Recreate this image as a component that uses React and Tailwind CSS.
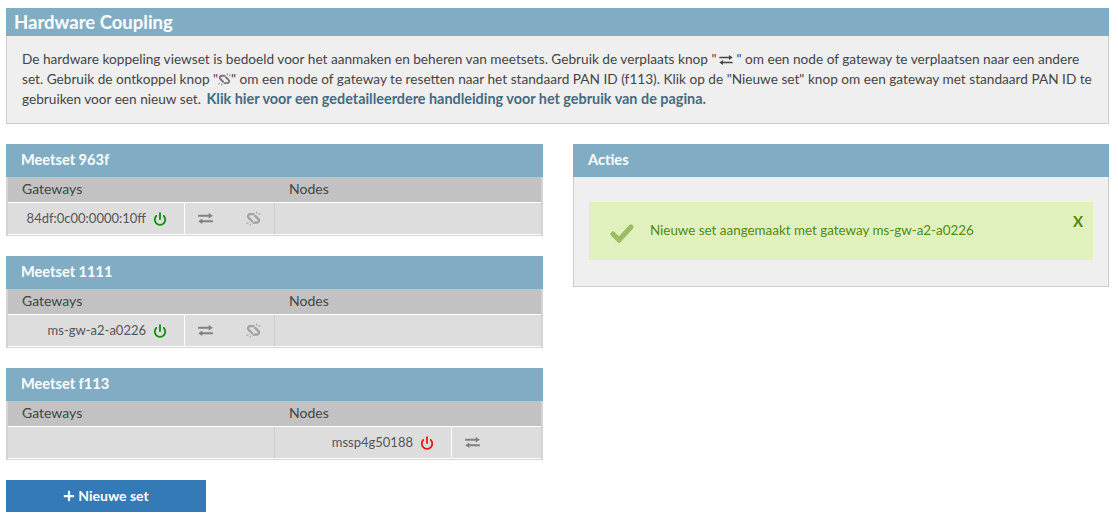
import React from "react";
import { FaPlus } from "react-icons/fa";
import { Power } from "lucide-react";

const Transfer = ({ className }) => (
  <svg viewBox="0 0 16 12" className={className} fill="currentColor" aria-hidden="true">
    <path d="M0 2h11.5V0L16 3 11.5 6V4H0z" />
    <path d="M16 8H4.5V6L0 9l4.5 3v-2H16z" />
  </svg>
);

const Brk = ({ className }) => (
  <svg viewBox="0 0 14 14" className={className} fill="none" stroke="currentColor" aria-hidden="true">
    <path d="M7 3H4a2 2 0 0 0-1.4 3.5L5.5 9.4" strokeWidth="2.1" strokeLinecap="round" />
    <path d="M8.5 4.6l2.9 2.8a2 2 0 0 1-1.4 3.5H7" strokeWidth="2.1" strokeLinecap="round" />
    <path d="M10 .4v2M13.6 2.2l-1.8 1.1M4 13.6v-2M.4 11.8l1.8-1.1" strokeWidth="1" />
  </svg>
);

const Check = ({ className }) => (
  <svg viewBox="0 0 24 20" className={className} fill="none" stroke="currentColor" aria-hidden="true">
    <path d="M3 11l6 6L21 4" strokeWidth="5" strokeLinecap="round" strokeLinejoin="miter" />
  </svg>
);

const PowerIcon = ({ on }) => (
  <Power className={on ? "w-[14px] h-[14px] text-[#0a8a0a]" : "w-[14px] h-[14px] text-[#f01010]"} strokeWidth={3} />
);

const NameCell = ({ name, on }) => (
  <div className="flex items-center justify-end gap-[7px] pr-[17px] h-full w-[176px] bg-[#dddddd]">
    <span className="text-[#555555] text-[13px]">{name}</span>
    <PowerIcon on={on} />
  </div>
);

const Actions = ({ unlink }) => (
  <div className="flex items-center h-full w-[90px] border-l border-white bg-[#dddddd] text-[#808080]">
    <Transfer className="ml-[13px] w-[15px] h-[11px]" />
    {unlink && <Brk className="ml-[33px] w-[15px] h-[15px] text-[#a0a0a0]" />}
  </div>
);

const MeetSet = ({ title, children }) => (
  <section>
    <h2 className="h-[33px] bg-[#81adc4] pl-[15px] pb-[2px] flex items-center text-white text-[14.6px] font-bold">{title}</h2>
    <div className="border-r-2 border-b border-l-2 border-[#d4d4d4] w-[537px]">
      <div className="flex h-[26px] pb-[2px] bg-[#c2c2c2] border-b border-white items-center text-[#444444]">
        <span className="w-[281px] pl-[14px]">Gateways</span>
        <span>Nodes</span>
      </div>
      <div className="flex h-[32px] border-b border-white">{children}</div>
    </div>
  </section>
);

export default function App() {
  return (
    <div className="w-[1118px] h-[523px] bg-white pl-[6px] pt-[8px] pr-[9px] text-[14px] leading-[19.5px] overflow-hidden font-['Lato','Noto_Sans',sans-serif]">
      <section>
        <h1 className="h-[28px] bg-[#81adc4] pl-[8px] pt-[1px] flex items-center text-white text-[18.5px] font-bold">Hardware Coupling</h1>
        <div className="h-[88px] bg-[#efefef] border border-t-0 border-[#cccccc] px-[15px] pt-[14px] text-[13.65px] text-[#444444]">
          <p className="whitespace-nowrap">
            De hardware koppeling viewset is bedoeld voor het aanmaken en beheren van meetsets. Gebruik de verplaats knop "
            <Transfer className="inline mx-[3px] w-[14px] h-[10px] text-[#444444] align-[-1px]" />
            " om een node of gateway te verplaatsen naar een andere<br />
            set. Gebruik de ontkoppel knop "
            <Brk className="inline w-[13px] h-[13px] text-[#777777] align-[-2px]" />
            " om een node of gateway te resetten naar het standaard PAN ID (f113). Klik op de "Nieuwe set" knop om een gateway met standaard PAN ID te<br />
            gebruiken voor een nieuw set. <a className="ml-[2px] text-[14.4px] font-bold text-[#456b80]">Klik hier voor een gedetailleerdere handleiding voor het gebruik van de pagina.</a>
          </p>
        </div>
      </section>

      <div className="flex gap-[30px] mt-[20px]">
        <div className="w-[537px] flex flex-col">
          <div className="flex flex-col gap-[20px]">
            <MeetSet title="Meetset 963f">
              <NameCell name="84df:0c00:0000:10ff" on />
              <Actions unlink />
              <div className="flex-1 bg-[#dddddd] border-l border-[#cccccc]" />
            </MeetSet>
            <MeetSet title="Meetset 1111">
              <NameCell name="ms-gw-a2-a0226" on />
              <Actions unlink />
              <div className="flex-1 bg-[#dddddd] border-l border-[#cccccc]" />
            </MeetSet>
            <MeetSet title="Meetset f113">
              <div className="w-[267px] bg-[#dddddd] border-r border-[#cccccc]" />
              <NameCell name="mssp4g50188" />
              <Actions />
            </MeetSet>
          </div>
          <button className="mt-[20px] w-[200px] h-[32px] bg-[#337ab7] text-white font-bold flex items-center justify-center gap-[3px]">
            <FaPlus className="w-[12px] h-[12px]" />
            Nieuwe set
          </button>
        </div>

        <section className="w-[536px]">
          <h2 className="h-[33px] bg-[#81adc4] pl-[15px] pb-[2px] flex items-center text-white text-[14.6px] font-bold">Acties</h2>
          <div className="h-[110px] bg-[#efefef] border border-t-0 border-[#cccccc] px-[15px] pt-[25px]">
            <div className="relative h-[58px] bg-[#e0f1be] flex items-center pl-[21px] text-[13.4px] text-[#4f8a10]">
              <Check className="w-[24px] h-[20px] text-[#9cbb62] mt-[4px]" />
              <span className="ml-[16px]">Nieuwe set aangemaakt met gateway ms-gw-a2-a0226</span>
              <span className="absolute right-[10px] top-[10px] text-[15px] font-bold">X</span>
            </div>
          </div>
        </section>
      </div>
    </div>
  );
}
